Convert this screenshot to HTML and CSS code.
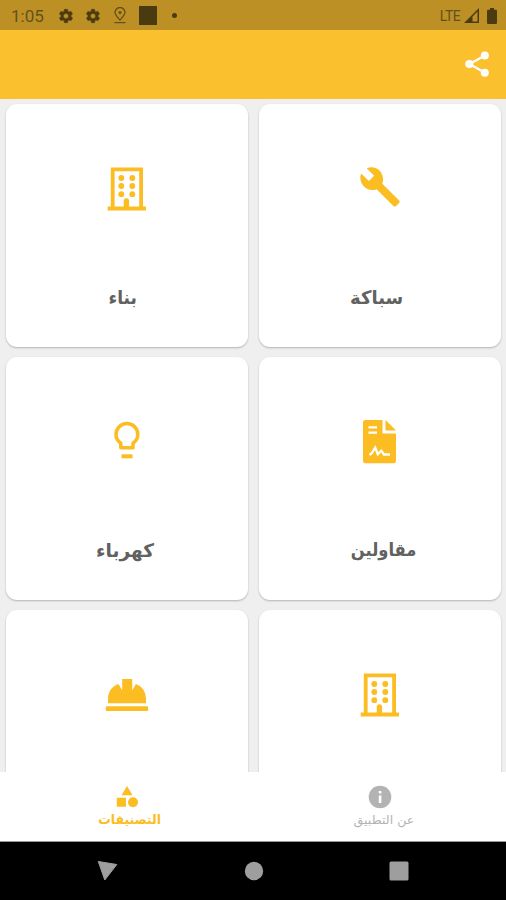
FILE: index.html
```html
<!DOCTYPE html>
<html lang="ar">
<head>
<meta charset="utf-8">
<title>التصنيفات</title>
<link rel="stylesheet" href="styles.css">
</head>
<body>
<svg class="defs" width="0" height="0">
  <symbol id="gear" viewBox="0 0 24 24"><path fill-rule="evenodd" stroke="currentColor" stroke-width=".8" d="M19.400 13a7.500 7.500 0 0 0 0-2l2.100-1.600c.2-.2.3-.4.1-.7l-2-3.400c-.1-.2-.4-.3-.6-.2l-2.500 1a7.300 7.300 0 0 0-1.700-1l-.4-2.600A.5.5 0 0 0 14 2h-4c-.3 0-.5.2-.5.5l-.4 2.600a7.300 7.300 0 0 0-1.700 1l-2.500-1c-.2-.1-.5 0-.6.2l-2 3.400c-.1.200-.1.500.1.700L4.600 11a7.500 7.500 0 0 0 0 2l-2.200 1.600c-.2.200-.2.400-.1.700l2 3.400c.1.200.4.300.6.200l2.500-1c.5.400 1.100.7 1.700 1l.4 2.600c0 .3.200.5.500.5h4c.3 0 .5-.2.500-.5l.4-2.600a7.300 7.300 0 0 0 1.700-1l2.500 1c.2.100.5 0 .6-.2l2-3.400c.1-.2.100-.5-.1-.7zM12 15.900a3.900 3.900 0 1 1 0-7.800 3.900 3.900 0 0 1 0 7.800z"/></symbol>
  <symbol id="building" viewBox="0 0 44 44">
    <path fill-rule="evenodd" d="M5.800.5H38v39h3v4H2.700v-4h3.100zM9.600 4.300v35.200h9.100V34a2.700 2.700 0 0 1 5.400 0v5.500h10.100V4.300z"/>
    <circle cx="16.300" cy="11" r="2.900"/><circle cx="27.300" cy="11" r="2.900"/>
    <circle cx="16.300" cy="19" r="2.900"/><circle cx="27.300" cy="19" r="2.900"/>
    <circle cx="16.300" cy="27.200" r="2.900"/><circle cx="27.300" cy="27.200" r="2.900"/>
  </symbol>
</svg>
<div class="screen">
  <header class="status">
    <span class="clock">1:05</span>
    <svg class="gear"><use href="#gear"/></svg>
    <svg class="gear gear-second"><use href="#gear"/></svg>
    <svg class="pin" viewBox="0 0 14 17"><path d="M7 13C4 9.700 2 7.600 2 5.500a5 5 0 0 1 10 0C12 7.600 10 9.700 7 13zM1.500 15.600h11" fill="none" stroke="currentColor" stroke-width="1.300"/><circle cx="7" cy="5.500" r="1.600"/></svg>
    <span class="square"></span>
    <span class="dot"></span>
    <span class="network">LTE</span>
    <svg class="signal" viewBox="0 0 15 15"><path fill-rule="evenodd" d="M0 15 15 0v15zM8.500 8.500V13.500h5V3.500z"/></svg>
    <svg class="battery" viewBox="0 0 10 16"><path d="M3 0h4v1.700h2q1 0 1 1V15q0 1-1 1H1q-1 0-1-1V2.700q0-1 1-1h2z"/></svg>
  </header>
  <div class="appbar">
    <svg class="share" viewBox="0 0 24 26"><path d="M20 4.500 4.500 13 20 21.700" fill="none" stroke="currentColor" stroke-width="2.400"/><circle cx="19.800" cy="4.500" r="4"/><circle cx="4.300" cy="13" r="4"/><circle cx="19.800" cy="21.700" r="4"/></svg>
  </div>
  <main class="grid">
    <article class="card">
      <svg class="icon"><use href="#building"/></svg>
      <h2 class="label label-build">بناء</h2>
    </article>
    <article class="card">
      <svg class="icon" viewBox="0 0 44 44"><path d="M41.300 34.500 23.400 17.300c1.800-4.500.8-9.900-3-13.600C16.500 0 11.300-.6 6.800 1.200l8 7.800-5.700 5.500-8.200-7.800C-1 11 .1 16.400 3.900 20.100c3.700 3.600 9 4.600 13.500 2.800l17.800 17.300c.8.8 2 .8 2.800 0l3.300-3.200c.8-.8.8-1.900 0-2.500z" transform="translate(2.300 0) scale(.94 .97)"/></svg>
      <h2 class="label label-plumb">سباكة</h2>
    </article>
    <article class="card">
      <svg class="icon" viewBox="0 0 44 44"><path d="M15.800 30.200v-4.700C12.500 23.500 11 20.300 11 17a10.900 10.900 0 0 1 21.800 0c0 3.300-1.500 6.500-4.800 8.500v4.700z" transform="translate(0 -2.500)" fill="none" stroke="currentColor" stroke-width="3.500" stroke-linejoin="round"/><path d="M16.500 34.300h11v4h-11z"/></svg>
      <h2 class="label label-power">كهرباء</h2>
    </article>
    <article class="card">
      <svg class="icon" viewBox="0 0 44 44"><path d="M7.200 0H24.500v13.500H38v27.200a2.500 2.500 0 0 1-2.500 2.500H7.500A2.500 2.500 0 0 1 5 40.700V2.500A2.500 2.500 0 0 1 7.200 0zM27.500 0l10.500 10.500H27.500z"/><path d="M10.500 7.300H19M10.500 12.700H19M11.500 35l2.400-2 3.300-5.500 2.600 6.700 3.500-3.500 2.700 3.800H32" fill="none" stroke="#fff" stroke-width="2.300"/></svg>
      <h2 class="label label-contract">مقاولين</h2>
    </article>
    <article class="card">
      <svg class="icon" viewBox="0 0 44 44"><path d="M3 30.300v-4C3 18.500 7 13 13.500 11l3.700 6.500V6h10v11.500l3.700-6.500C37 13 41 18.500 41 26.300v4zM1.800 33.200h40.400q1 0 1 1V37q0 1-1 1H1.800q-1 0-1-1v-2.800q0-1 1-1z"/></svg>
    </article>
    <article class="card">
      <svg class="icon"><use href="#building"/></svg>
    </article>
  </main>
  <nav class="tabs">
    <a class="tab active">
      <svg class="tab-icon" viewBox="0 0 24 24"><path d="m12 1 5.500 9.200H6.500zM1.800 12.700h9.200v9.100H1.800z"/><circle cx="18" cy="17.300" r="5"/></svg>
      <span class="tab-label tab-categories">التصنيفات</span>
    </a>
    <a class="tab">
      <svg class="tab-icon" viewBox="0 0 24 24"><circle cx="12" cy="12" r="11.300"/><path d="M10.800 6h2.600v2.500h-2.600zM10.800 10.500h2.600V18h-2.600z" fill="#fff"/></svg>
      <span class="tab-label tab-about">عن التطبيق</span>
    </a>
  </nav>
  <footer class="system">
    <svg viewBox="0 0 22 22"><path d="m1.300 1.500 18.500 3-12 15.500z" stroke="currentColor" stroke-linejoin="round"/></svg>
    <svg viewBox="0 0 22 22"><circle cx="11" cy="11" r="9.200"/></svg>
    <svg viewBox="0 0 22 22"><rect x="1.500" y="1.500" width="19" height="19" rx="1.500"/></svg>
  </footer>
</div>
</body>
</html>
```
FILE: styles.css
```css
* { box-sizing: border-box; }
body { margin: 0; }
svg { display: block; flex: none; fill: currentColor; }
.defs { position: absolute; }
.screen {
  width: 506px;
  height: 900px;
  display: flex;
  flex-direction: column;
  overflow: hidden;
  background: #efefef;
  font-family: Roboto, "DejaVu Sans", sans-serif;
}
.status {
  height: 30px;
  flex: none;
  display: flex;
  align-items: center;
  padding: 1px 9px 0 11px;
  background: #bc9024;
  color: #4c3b10;
}
.clock { width: 47px; font-size: 17px; color: #65501b; }
.gear { width: 16px; height: 16px; }
.gear-second { margin-left: 11px; }
.pin { width: 14px; height: 17px; margin-left: 12px; color: #65501b; }
.square { width: 18px; height: 19px; margin-left: 12px; background: #4a3a10; }
.dot { width: 5px; height: 5px; margin-left: 15px; border-radius: 50%; background: #4c3b10; }
.network { margin-left: auto; font-size: 14px; letter-spacing: -0.6px; color: #65501b; }
.signal { width: 15px; height: 15px; margin-left: 4px; }
.battery { width: 10px; height: 16px; margin-left: 8px; }
.appbar {
  height: 69px;
  flex: none;
  display: flex;
  align-items: center;
  justify-content: flex-end;
  padding: 0 17px 1px 0;
  background: #fbc02d;
  color: #fff;
}
.share { width: 24px; height: 26px; }
.grid {
  height: 673px;
  flex: none;
  overflow: hidden;
  display: grid;
  grid-template-columns: 242.5px 242.5px;
  grid-auto-rows: 243px;
  gap: 10px 10.500px;
  padding: 5px 5px 0 5.5px;
}
.card {
  display: flex;
  flex-direction: column;
  align-items: center;
  padding-top: 63px;
  border-radius: 11px;
  background: #fff;
  box-shadow: 0 1px 2px rgba(0, 0, 0, 0.25);
  color: #fbbd22;
}
.icon { width: 44px; height: 44px; }
.label {
  margin: 72px 0 0;
  font: bold 17px/28px "DejaVu Sans", sans-serif;
  color: #616161;
  white-space: nowrap;
}
.label-build { transform: translateX(-4px) scaleY(1.1); }
.label-plumb { transform: translateX(-3.5px) scale(1.06, 1.1); }
.label-power { transform: translateX(-1.5px) scale(1.09, 1.1); }
.label-contract { transform: translateX(3.5px) scale(0.96, 1.05); }
.tabs {
  height: 70px;
  flex: none;
  display: grid;
  grid-template-columns: 1fr 1fr;
  background: #fff;
  border-bottom: 1px solid #999;
}
.tab {
  display: flex;
  flex-direction: column;
  align-items: center;
  padding-top: 13px;
  color: #b3b3b3;
}
.active { color: #fbbd22; }
.tab-icon { width: 24px; height: 24px; }
.tab-label { font: 12px/22px "DejaVu Sans", sans-serif; white-space: nowrap; }
.tab-categories { font-weight: bold; transform: translateX(3.5px) scale(1.04, 1.1); }
.tab-about { transform: translateX(4px) scaleX(1.05); }
.system {
  height: 58px;
  flex: none;
  display: flex;
  align-items: center;
  justify-content: space-between;
  padding: 0 96px 0 97px;
  background: #000;
  color: #9e9e9e;
}
.system svg { width: 22px; height: 22px; }
```
